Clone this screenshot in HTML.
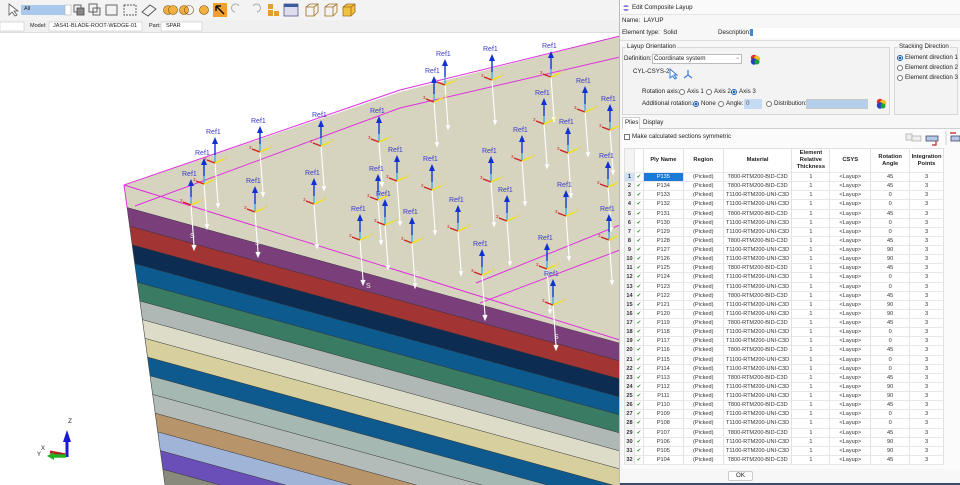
<!DOCTYPE html>
<html><head><meta charset="utf-8">
<style>
*{box-sizing:border-box;margin:0;padding:0}
html{overflow:hidden}
body{width:960px;height:485px;overflow:hidden;background:#fff;font-family:"Liberation Sans",sans-serif;position:relative;color:#222}
.abs{position:absolute}
.t{position:absolute;font-size:6.2px;white-space:nowrap;line-height:8px}
.rad{position:absolute;width:6px;height:6px;border:1px solid #777;border-radius:50%;background:#fff}
.rad.on{border:1.5px solid #1a5fb4;background:radial-gradient(circle,#1a5fb4 45%,#fff 50%)}
.row{display:flex;height:9.13px;font-size:5.6px;line-height:9px;color:#333}
.row div,.hdr div{border-right:1px solid #e2e2e2;border-bottom:1px solid #e8e8e8;text-align:center;overflow:hidden;white-space:nowrap}
.hdr{display:flex;height:24px;font-size:5.8px;font-weight:bold;color:#222}
.hdr div{display:flex;align-items:center;justify-content:center;line-height:7px}
.c0{width:10px;font-weight:bold;background:#f4f4f4}.c1{width:9px;color:#2a9a2a}.c2{width:40px}.c3{width:40px}.c4{width:69px}.c5{width:38px}.c6{width:41px}.c7{width:39px}.c8{width:34px}
</style></head><body>
<div class="abs" style="left:0;top:0;width:620px;height:20px;background:#f3f3f3"></div>
<div class="abs" style="left:0;top:20px;width:620px;height:13px;background:#f0f0f0;border-bottom:1px solid #ddd"></div>
<svg class="abs" style="left:0;top:0" width="620" height="33">
<path d="M9 4 L9 15 L12 12 L15 16 L17 15 L14 11 L18 11 Z" fill="#fff" stroke="#555" stroke-width="0.8"/>
<rect x="21" y="5" width="44" height="10" fill="#a8c8ec"/>
<rect x="65" y="5" width="6" height="10" fill="#fff" stroke="#aaa" stroke-width="0.5"/>
<g fill="none" stroke="#555" stroke-width="0.9">
<rect x="74" y="5" width="7" height="7"/><rect x="77" y="8" width="7" height="7" fill="#888"/>
<rect x="89" y="4" width="8" height="8"/><rect x="93" y="8" width="7" height="7"/>
<rect x="106" y="5" width="11" height="10"/>
<rect x="124" y="5" width="12" height="10" stroke-dasharray="2 1"/>
<path d="M142 12 L150 5 L156 9 L148 16 Z"/>
</g>
<circle cx="168" cy="10" r="4.5" fill="#f0b040" stroke="#7a5010" stroke-width=".6"/><circle cx="173" cy="10" r="4.5" fill="#f0b040" stroke="#7a5010" stroke-width=".6"/>
<circle cx="184" cy="10" r="4.5" fill="#f0b040" stroke="#7a5010" stroke-width=".6"/><circle cx="189" cy="10" r="4.5" fill="none" stroke="#7a5010" stroke-width=".6"/>
<circle cx="204" cy="10" r="4.5" fill="#f0b040" stroke="#7a5010" stroke-width=".6"/>
<rect x="213" y="3" width="14" height="14" fill="#f0a030"/><path d="M216 6 L224 14 M216 6 L216 11 M216 6 L221 6" stroke="#111" stroke-width="1.5"/>
<path d="M235 12 A4 4 0 1 1 239 6" fill="none" stroke="#aaa"/><path d="M257 12 A4 4 0 1 0 253 6" fill="none" stroke="#aaa"/>
<rect x="268" y="4" width="5" height="5" fill="#e0a030"/><rect x="268" y="10" width="5" height="6" fill="#e0a030"/><rect x="274" y="11" width="5" height="5" fill="#e0a030"/>
<rect x="284" y="4" width="14" height="12" fill="#dde" stroke="#447" stroke-width=".7"/><rect x="284" y="4" width="14" height="3" fill="#3a5aa0"/>
<g fill="none" stroke="#a07020" stroke-width=".8"><path d="M306 7 L310 4 L318 4 L318 12 L314 16 L306 16 Z M306 7 L314 7 L314 16 M314 7 L318 4"/>
<path d="M325 7 L329 4 L337 4 L337 12 L333 16 L325 16 Z M325 7 L333 7 L333 16 M333 7 L337 4"/></g>
<path d="M343 7 L347 4 L355 4 L355 12 L351 16 L343 16 Z" fill="#f0c040" stroke="#a07020" stroke-width=".8"/><path d="M343 7 L351 7 L351 16 M351 7 L355 4" fill="none" stroke="#a07020" stroke-width=".8"/>
<rect x="0" y="22" width="24" height="9" fill="#fff" stroke="#bbb" stroke-width=".5"/>
<rect x="49" y="22" width="93" height="9" fill="#fff" stroke="#bbb" stroke-width=".5"/>
<rect x="161" y="22" width="41" height="9" fill="#fff" stroke="#bbb" stroke-width=".5"/>
</svg>
<div class="t" style="left:30px;top:22px;font-size:5.5px">Model:</div>
<div class="t" style="left:53px;top:22px;font-size:5.5px">JAS41-BLADE-ROOT-WEDGE-01</div>
<div class="t" style="left:149px;top:22px;font-size:5.5px">Part:</div>
<div class="t" style="left:166px;top:22px;font-size:5.5px">SPAR</div>
<div class="t" style="left:24px;top:5px;font-size:5.5px">All</div>

<svg class="abs" style="left:0;top:33px" width="620" height="452" viewBox="0 33 620 452">
<defs>
<clipPath id="side"><polygon points="127,207 620,343 620,485 165,485"/></clipPath>
<g id="a">
<line x1="2" y1="32" x2="5" y2="72" stroke="#fff" stroke-width="1.1"/>
<path d="M2.5 72 L5 78 L7.5 72 Z" fill="#fff" stroke="#ccc" stroke-width=".3"/>
<line x1="2" y1="32" x2="2" y2="12" stroke="#2aa8e0" stroke-width="1.2"/>
<line x1="2" y1="24" x2="2" y2="12" stroke="#1030d0" stroke-width="1.3"/>
<path d="M-1 13 L2 6 L5 13 Z" fill="#1030d0"/>
<path d="M2 32 L-6 29" stroke="#d02020" stroke-width="1.4"/><text x="-9" y="29" font-size="4.5" fill="#d02020">3</text>
<path d="M2 32 L11 28" stroke="#f0e020" stroke-width="1.6"/><text x="12" y="28" font-size="4.5" fill="#e8d020">2</text>
</g>
</defs>
<polygon points="124,185 400,92 620,36 620,343 127,207" fill="#d6d4bf"/>
<g clip-path="url(#side)">
<g stroke="#333" stroke-width=".5">
<polygon points="100,200 620,343 620,380 100,220" fill="#7a3e7a"/>
<polygon points="100,218 620,361 620,400 100,238" fill="#a33434"/>
<polygon points="100,236 620,379 620,420 100,256" fill="#0c2c52"/>
<polygon points="100,254 620,397 620,440 100,274" fill="#0c5a8e"/>
<polygon points="100,272 620,415 620,460 100,292" fill="#3a7b64"/>
<polygon points="100,290 620,433 620,480 100,310" fill="#afb8b5"/>
<polygon points="100,308 620,451 620,500 100,328" fill="#dcdcc8"/>
<polygon points="100,326 620,469 620,520 100,346" fill="#d7d09e"/>
<polygon points="100,344 620,487 620,540 100,364" fill="#0e5a8e"/>
<polygon points="100,362 620,505 620,560 100,382" fill="#a6b8b2"/>
<polygon points="100,380 620,523 620,580 100,400" fill="#b3bcb9"/>
<polygon points="100,398 620,541 620,600 100,418" fill="#b8946a"/>
<polygon points="100,416 620,559 620,620 100,436" fill="#a0b4d8"/>
<polygon points="100,434 620,577 620,640 100,454" fill="#6a4fb8"/>
<polygon points="100,452 620,595 620,660 100,472" fill="#8a8a7c"/>
<polygon points="100,470 620,613 620,680 100,500" fill="#a0b4d8"/>
</g></g>
<line x1="127" y1="207" x2="165" y2="485" stroke="#444" stroke-width=".6"/>
<g fill="none" stroke="#e030e0" stroke-width="1">
<polyline points="124,185 400,90 620,36"/>
<polyline points="124,185 127,207"/>
<polyline points="124,185 620,340"/>
<polyline points="135,206 400,108 620,57"/>
<polyline points="476,283 620,225"/>
<polyline points="480,303 620,250"/>
</g>
<g>
<use href="#a" x="213" y="131"/><use href="#a" x="202" y="152"/><use href="#a" x="189" y="173"/><use href="#a" x="258" y="120"/><use href="#a" x="253" y="180"/><use href="#a" x="319" y="114"/><use href="#a" x="312" y="172"/><use href="#a" x="377" y="110"/><use href="#a" x="395" y="149"/><use href="#a" x="376" y="168"/><use href="#a" x="383" y="193"/><use href="#a" x="410" y="211"/><use href="#a" x="358" y="208"/><use href="#a" x="430" y="158"/><use href="#a" x="443" y="53"/><use href="#a" x="432" y="70"/><use href="#a" x="490" y="48"/><use href="#a" x="489" y="150"/><use href="#a" x="480" y="243"/><use href="#a" x="456" y="199"/><use href="#a" x="505" y="189"/><use href="#a" x="549" y="45"/><use href="#a" x="542" y="92"/><use href="#a" x="583" y="80"/><use href="#a" x="566" y="121"/><use href="#a" x="564" y="184"/><use href="#a" x="545" y="237"/><use href="#a" x="551" y="273"/><use href="#a" x="608" y="98"/><use href="#a" x="606" y="155"/><use href="#a" x="607" y="208"/><use href="#a" x="520" y="129"/>
</g>
<g font-size="7" fill="#3a3ac8" font-family="Liberation Sans,sans-serif">
<text x="206" y="134">Ref1</text><text x="195" y="155">Ref1</text><text x="182" y="176">Ref1</text><text x="251" y="123">Ref1</text><text x="246" y="183">Ref1</text><text x="312" y="117">Ref1</text><text x="305" y="175">Ref1</text><text x="370" y="113">Ref1</text><text x="388" y="152">Ref1</text><text x="369" y="171">Ref1</text><text x="376" y="196">Ref1</text><text x="403" y="214">Ref1</text><text x="351" y="211">Ref1</text><text x="423" y="161">Ref1</text><text x="436" y="56">Ref1</text><text x="425" y="73">Ref1</text><text x="483" y="51">Ref1</text><text x="482" y="153">Ref1</text><text x="473" y="246">Ref1</text><text x="449" y="202">Ref1</text><text x="498" y="192">Ref1</text><text x="542" y="48">Ref1</text><text x="535" y="95">Ref1</text><text x="576" y="83">Ref1</text><text x="559" y="124">Ref1</text><text x="557" y="187">Ref1</text><text x="538" y="240">Ref1</text><text x="544" y="276">Ref1</text><text x="601" y="101">Ref1</text><text x="599" y="158">Ref1</text><text x="600" y="211">Ref1</text><text x="513" y="132">Ref1</text>
</g>
<g font-size="7" fill="#eee" font-family="Liberation Sans,sans-serif">
<text x="190" y="238">S</text><text x="366" y="288">S</text><text x="554" y="339">S</text><text x="255" y="245">S</text><text x="415" y="276">S</text>
</g>
<path d="M67 457 L67 440" stroke="#1a1ad0" stroke-width="3"/><path d="M63 442 L67 430 L71 442 Z" fill="#1a1ad0"/>
<path d="M50 452 L66 455" stroke="#b02020" stroke-width="3"/>
<path d="M66 456 L52 456" stroke="#20b020" stroke-width="3.5"/><path d="M54 452 L47 456 L54 460 Z" fill="#20b020"/>
<text x="68" y="423" font-size="6.5" fill="#222">Z</text><text x="41" y="450" font-size="6" fill="#222">X</text><text x="37" y="456" font-size="6" fill="#222">Y</text>
</svg>

<div class="abs" style="left:619px;top:0;width:341px;height:485px;background:#f7f7f7;border-left:1px solid #bbb"></div>
<div class="abs" style="left:620px;top:0;width:340px;height:15px;background:#fafafa;border-bottom:1px solid #e4e4e4"></div>
<svg class="abs" style="left:622px;top:4px" width="8" height="8"><circle cx="4" cy="4" r="3" fill="#8a7ad0"/><rect x="1" y="3" width="6" height="2" fill="#fff"/></svg>
<div class="t" style="left:632px;top:4px">Edit Composite Layup</div>
<div class="t" style="left:622px;top:17px">Name:&nbsp; LAYUP</div>
<div class="t" style="left:622px;top:29px">Element type:&nbsp; Solid</div>
<div class="t" style="left:718px;top:29px">Description:</div>
<div class="abs" style="left:750px;top:28px;width:210px;height:10px;background:#fff"></div>
<div class="abs" style="left:750px;top:29px;width:3px;height:7px;background:#3a8ad8"></div>
<div class="abs" style="left:620px;top:40px;width:340px;height:1px;background:#ddd"></div>
<div class="abs" style="left:622px;top:47px;width:268px;height:68px;border:1px solid #d8d8d8;background:#f3f3f3"></div>
<div class="t" style="left:626px;top:43px;background:#f7f7f7;padding:0 1px">Layup Orientation</div>
<div class="t" style="left:624px;top:55px">Definition:</div>
<div class="abs" style="left:652px;top:54px;width:90px;height:10px;background:#fff;border:1px solid #bbb"></div>
<div class="t" style="left:654px;top:55px">Coordinate system</div>
<div class="t" style="left:735px;top:54px;color:#888">⌄</div>
<svg class="abs" style="left:750px;top:54px" width="11" height="11"><circle cx="4" cy="4" r="3.2" fill="#e03030"/><circle cx="7" cy="5" r="3.2" fill="#f0c020"/><circle cx="4" cy="7.5" r="3.2" fill="#2040c0"/><circle cx="7" cy="8" r="2.5" fill="#20a040"/></svg>
<div class="t" style="left:633px;top:68px">CYL-CSYS-2</div>
<svg class="abs" style="left:668px;top:68px" width="28" height="12"><path d="M2 1 L2 10 L4.5 8 L7 11 L8.5 10 L6 7 L9 7 Z" fill="#fff" stroke="#3a7ad8" stroke-width="1"/><path d="M20 2 L20 7 L16 10 M20 7 L24 10" stroke="#3a7ad8" stroke-width="1.2" fill="none"/></svg>
<div class="t" style="left:642px;top:88px">Rotation axis:</div>
<div class="rad" style="left:679px;top:89px"></div><div class="t" style="left:687px;top:88px">Axis 1</div>
<div class="rad" style="left:706px;top:89px"></div><div class="t" style="left:714px;top:88px">Axis 2</div>
<div class="rad on" style="left:731px;top:89px"></div><div class="t" style="left:739px;top:88px">Axis 3</div>
<div class="t" style="left:642px;top:100px">Additional rotation:</div>
<div class="rad on" style="left:693px;top:101px"></div><div class="t" style="left:701px;top:100px">None</div>
<div class="rad" style="left:718px;top:101px"></div><div class="t" style="left:726px;top:100px">Angle:</div>
<div class="abs" style="left:744px;top:99px;width:18px;height:10px;background:#c4daf2"></div><div class="t" style="left:746px;top:100px;color:#555">0</div>
<div class="rad" style="left:766px;top:101px"></div><div class="t" style="left:774px;top:100px">Distribution:</div>
<div class="abs" style="left:806px;top:99px;width:62px;height:10px;background:#b4cfec;border:1px solid #c8c8c8"></div>
<svg class="abs" style="left:876px;top:98px" width="11" height="11"><circle cx="4" cy="4" r="3.2" fill="#e03030"/><circle cx="7" cy="5" r="3.2" fill="#f0c020"/><circle cx="4" cy="7.5" r="3.2" fill="#2040c0"/><circle cx="7" cy="8" r="2.5" fill="#20a040"/></svg>
<div class="abs" style="left:894px;top:47px;width:64px;height:68px;border:1px solid #d8d8d8;background:#f3f3f3"></div>
<div class="t" style="left:898px;top:43px;background:#f7f7f7;padding:0 1px">Stacking Direction</div>
<div class="rad on" style="left:897px;top:55px"></div><div class="t" style="left:905px;top:54px">Element direction 1</div>
<div class="rad" style="left:897px;top:65px"></div><div class="t" style="left:905px;top:64px">Element direction 2</div>
<div class="rad" style="left:897px;top:75px"></div><div class="t" style="left:905px;top:74px">Element direction 3</div>
<div class="abs" style="left:622px;top:128px;width:338px;height:1px;background:#d0d0d0"></div>
<div class="abs" style="left:622px;top:117px;width:18px;height:12px;background:#fff;border:1px solid #d0d0d0;border-bottom:none"></div>
<div class="t" style="left:625px;top:119px">Plies</div>
<div class="t" style="left:643px;top:119px">Display</div>
<div class="abs" style="left:622px;top:129px;width:338px;height:340px;background:#fbfbfb"></div>
<div class="abs" style="left:624px;top:134px;width:6px;height:6px;border:1px solid #777;background:#fff"></div>
<div class="t" style="left:632px;top:133px">Make calculated sections symmetric</div>
<svg class="abs" style="left:904px;top:129px" width="56" height="18"><g stroke="#aaa" fill="#eee" stroke-width=".7"><rect x="2" y="5" width="6" height="6"/><rect x="8" y="7" width="9" height="5"/></g><rect x="22" y="7" width="12" height="5" fill="#b4c8e8" stroke="#335" stroke-width=".7"/><path d="M32 12 L32 16 L28 16" stroke="#d02020" stroke-width="1.2" fill="none"/><line x1="42" y1="2" x2="42" y2="16" stroke="#ccc"/><path d="M46 4 L52 4" stroke="#d02020" stroke-width="1.3"/><rect x="47" y="7" width="9" height="5" fill="#b4c8e8" stroke="#335" stroke-width=".7"/></svg>
<div class="abs" style="left:624px;top:148px;width:320px;background:#fff;border-left:1px solid #e0e0e0;border-top:1px solid #e0e0e0">
<div class="hdr"><div class="c0"></div><div class="c1"></div><div class="c2">Ply Name</div><div class="c3">Region</div><div class="c4">Material</div><div class="c5">Element<br>Relative<br>Thickness</div><div class="c6">CSYS</div><div class="c7">Rotation<br>Angle</div><div class="c8">Integration<br>Points</div></div>
<div class="row"><div class="c0" style="background:#cfe0f4">1</div><div class="c1">✔</div><div class="c2" style="background:#1a7ad8;color:#fff">P135</div><div class="c3">(Picked)</div><div class="c4">T800-RTM200-BID-C3D</div><div class="c5">1</div><div class="c6">&lt;Layup&gt;</div><div class="c7">45</div><div class="c8">3</div></div>
<div class="row"><div class="c0">2</div><div class="c1">✔</div><div class="c2">P134</div><div class="c3">(Picked)</div><div class="c4">T800-RTM200-BID-C3D</div><div class="c5">1</div><div class="c6">&lt;Layup&gt;</div><div class="c7">45</div><div class="c8">3</div></div>
<div class="row"><div class="c0">3</div><div class="c1">✔</div><div class="c2">P133</div><div class="c3">(Picked)</div><div class="c4">T1100-RTM200-UNI-C3D</div><div class="c5">1</div><div class="c6">&lt;Layup&gt;</div><div class="c7">0</div><div class="c8">3</div></div>
<div class="row"><div class="c0">4</div><div class="c1">✔</div><div class="c2">P132</div><div class="c3">(Picked)</div><div class="c4">T1100-RTM200-UNI-C3D</div><div class="c5">1</div><div class="c6">&lt;Layup&gt;</div><div class="c7">0</div><div class="c8">3</div></div>
<div class="row"><div class="c0">5</div><div class="c1">✔</div><div class="c2">P131</div><div class="c3">(Picked)</div><div class="c4">T800-RTM200-BID-C3D</div><div class="c5">1</div><div class="c6">&lt;Layup&gt;</div><div class="c7">45</div><div class="c8">3</div></div>
<div class="row"><div class="c0">6</div><div class="c1">✔</div><div class="c2">P130</div><div class="c3">(Picked)</div><div class="c4">T1100-RTM200-UNI-C3D</div><div class="c5">1</div><div class="c6">&lt;Layup&gt;</div><div class="c7">0</div><div class="c8">3</div></div>
<div class="row"><div class="c0">7</div><div class="c1">✔</div><div class="c2">P129</div><div class="c3">(Picked)</div><div class="c4">T1100-RTM200-UNI-C3D</div><div class="c5">1</div><div class="c6">&lt;Layup&gt;</div><div class="c7">0</div><div class="c8">3</div></div>
<div class="row"><div class="c0">8</div><div class="c1">✔</div><div class="c2">P128</div><div class="c3">(Picked)</div><div class="c4">T800-RTM200-BID-C3D</div><div class="c5">1</div><div class="c6">&lt;Layup&gt;</div><div class="c7">45</div><div class="c8">3</div></div>
<div class="row"><div class="c0">9</div><div class="c1">✔</div><div class="c2">P127</div><div class="c3">(Picked)</div><div class="c4">T1100-RTM200-UNI-C3D</div><div class="c5">1</div><div class="c6">&lt;Layup&gt;</div><div class="c7">90</div><div class="c8">3</div></div>
<div class="row"><div class="c0">10</div><div class="c1">✔</div><div class="c2">P126</div><div class="c3">(Picked)</div><div class="c4">T1100-RTM200-UNI-C3D</div><div class="c5">1</div><div class="c6">&lt;Layup&gt;</div><div class="c7">90</div><div class="c8">3</div></div>
<div class="row"><div class="c0">11</div><div class="c1">✔</div><div class="c2">P125</div><div class="c3">(Picked)</div><div class="c4">T800-RTM200-BID-C3D</div><div class="c5">1</div><div class="c6">&lt;Layup&gt;</div><div class="c7">45</div><div class="c8">3</div></div>
<div class="row"><div class="c0">12</div><div class="c1">✔</div><div class="c2">P124</div><div class="c3">(Picked)</div><div class="c4">T1100-RTM200-UNI-C3D</div><div class="c5">1</div><div class="c6">&lt;Layup&gt;</div><div class="c7">0</div><div class="c8">3</div></div>
<div class="row"><div class="c0">13</div><div class="c1">✔</div><div class="c2">P123</div><div class="c3">(Picked)</div><div class="c4">T1100-RTM200-UNI-C3D</div><div class="c5">1</div><div class="c6">&lt;Layup&gt;</div><div class="c7">0</div><div class="c8">3</div></div>
<div class="row"><div class="c0">14</div><div class="c1">✔</div><div class="c2">P122</div><div class="c3">(Picked)</div><div class="c4">T800-RTM200-BID-C3D</div><div class="c5">1</div><div class="c6">&lt;Layup&gt;</div><div class="c7">45</div><div class="c8">3</div></div>
<div class="row"><div class="c0">15</div><div class="c1">✔</div><div class="c2">P121</div><div class="c3">(Picked)</div><div class="c4">T1100-RTM200-UNI-C3D</div><div class="c5">1</div><div class="c6">&lt;Layup&gt;</div><div class="c7">90</div><div class="c8">3</div></div>
<div class="row"><div class="c0">16</div><div class="c1">✔</div><div class="c2">P120</div><div class="c3">(Picked)</div><div class="c4">T1100-RTM200-UNI-C3D</div><div class="c5">1</div><div class="c6">&lt;Layup&gt;</div><div class="c7">90</div><div class="c8">3</div></div>
<div class="row"><div class="c0">17</div><div class="c1">✔</div><div class="c2">P119</div><div class="c3">(Picked)</div><div class="c4">T800-RTM200-BID-C3D</div><div class="c5">1</div><div class="c6">&lt;Layup&gt;</div><div class="c7">45</div><div class="c8">3</div></div>
<div class="row"><div class="c0">18</div><div class="c1">✔</div><div class="c2">P118</div><div class="c3">(Picked)</div><div class="c4">T1100-RTM200-UNI-C3D</div><div class="c5">1</div><div class="c6">&lt;Layup&gt;</div><div class="c7">0</div><div class="c8">3</div></div>
<div class="row"><div class="c0">19</div><div class="c1">✔</div><div class="c2">P117</div><div class="c3">(Picked)</div><div class="c4">T1100-RTM200-UNI-C3D</div><div class="c5">1</div><div class="c6">&lt;Layup&gt;</div><div class="c7">0</div><div class="c8">3</div></div>
<div class="row"><div class="c0">20</div><div class="c1">✔</div><div class="c2">P116</div><div class="c3">(Picked)</div><div class="c4">T800-RTM200-BID-C3D</div><div class="c5">1</div><div class="c6">&lt;Layup&gt;</div><div class="c7">45</div><div class="c8">3</div></div>
<div class="row"><div class="c0">21</div><div class="c1">✔</div><div class="c2">P115</div><div class="c3">(Picked)</div><div class="c4">T1100-RTM200-UNI-C3D</div><div class="c5">1</div><div class="c6">&lt;Layup&gt;</div><div class="c7">0</div><div class="c8">3</div></div>
<div class="row"><div class="c0">22</div><div class="c1">✔</div><div class="c2">P114</div><div class="c3">(Picked)</div><div class="c4">T1100-RTM200-UNI-C3D</div><div class="c5">1</div><div class="c6">&lt;Layup&gt;</div><div class="c7">0</div><div class="c8">3</div></div>
<div class="row"><div class="c0">23</div><div class="c1">✔</div><div class="c2">P113</div><div class="c3">(Picked)</div><div class="c4">T800-RTM200-BID-C3D</div><div class="c5">1</div><div class="c6">&lt;Layup&gt;</div><div class="c7">45</div><div class="c8">3</div></div>
<div class="row"><div class="c0">24</div><div class="c1">✔</div><div class="c2">P112</div><div class="c3">(Picked)</div><div class="c4">T1100-RTM200-UNI-C3D</div><div class="c5">1</div><div class="c6">&lt;Layup&gt;</div><div class="c7">90</div><div class="c8">3</div></div>
<div class="row"><div class="c0">25</div><div class="c1">✔</div><div class="c2">P111</div><div class="c3">(Picked)</div><div class="c4">T1100-RTM200-UNI-C3D</div><div class="c5">1</div><div class="c6">&lt;Layup&gt;</div><div class="c7">90</div><div class="c8">3</div></div>
<div class="row"><div class="c0">26</div><div class="c1">✔</div><div class="c2">P110</div><div class="c3">(Picked)</div><div class="c4">T800-RTM200-BID-C3D</div><div class="c5">1</div><div class="c6">&lt;Layup&gt;</div><div class="c7">45</div><div class="c8">3</div></div>
<div class="row"><div class="c0">27</div><div class="c1">✔</div><div class="c2">P109</div><div class="c3">(Picked)</div><div class="c4">T1100-RTM200-UNI-C3D</div><div class="c5">1</div><div class="c6">&lt;Layup&gt;</div><div class="c7">0</div><div class="c8">3</div></div>
<div class="row"><div class="c0">28</div><div class="c1">✔</div><div class="c2">P108</div><div class="c3">(Picked)</div><div class="c4">T1100-RTM200-UNI-C3D</div><div class="c5">1</div><div class="c6">&lt;Layup&gt;</div><div class="c7">0</div><div class="c8">3</div></div>
<div class="row"><div class="c0">29</div><div class="c1">✔</div><div class="c2">P107</div><div class="c3">(Picked)</div><div class="c4">T800-RTM200-BID-C3D</div><div class="c5">1</div><div class="c6">&lt;Layup&gt;</div><div class="c7">45</div><div class="c8">3</div></div>
<div class="row"><div class="c0">30</div><div class="c1">✔</div><div class="c2">P106</div><div class="c3">(Picked)</div><div class="c4">T1100-RTM200-UNI-C3D</div><div class="c5">1</div><div class="c6">&lt;Layup&gt;</div><div class="c7">90</div><div class="c8">3</div></div>
<div class="row"><div class="c0">31</div><div class="c1">✔</div><div class="c2">P105</div><div class="c3">(Picked)</div><div class="c4">T1100-RTM200-UNI-C3D</div><div class="c5">1</div><div class="c6">&lt;Layup&gt;</div><div class="c7">90</div><div class="c8">3</div></div>
<div class="row"><div class="c0">32</div><div class="c1">✔</div><div class="c2">P104</div><div class="c3">(Picked)</div><div class="c4">T800-RTM200-BID-C3D</div><div class="c5">1</div><div class="c6">&lt;Layup&gt;</div><div class="c7">45</div><div class="c8">3</div></div>
</div>
<div class="abs" style="left:728px;top:471px;width:25px;height:10px;background:#fdfdfd;border:1px solid #ccc;border-radius:2px"></div>
<div class="t" style="left:736px;top:472px">OK</div>
<div class="abs" style="left:620px;top:483px;width:340px;height:2px;background:#3a4a6a"></div>
</body></html>
